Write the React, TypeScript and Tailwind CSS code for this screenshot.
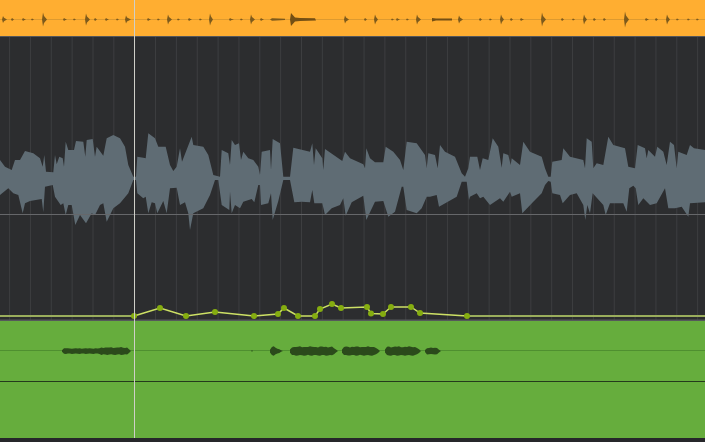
import React from "react";

type Pt = [number, number];

// envelope points per stretch: [start x, upper, lower], traced at 3x
const WAVE: { x0: number; up: number[]; low: number[] }[] = [
  {
    x0: 0,
    up: [0,105,15,125,35,135,45,105,60,105,75,78,100,85,120,100,128,125,133,90,138,140,160,142,165,90,170,118,178,95,188,100,192,125,197,50,205,75,222,75,228,48,250,50,256,95,260,45,278,42,285,95,290,65,310,92,320,40,340,30,360,40,375,65,385,120,400,155,408,155,412,95,430,98,437,100,445,25,465,40,475,65,497,65,510,120,520,138,530,125,540,70,546,110,575,35,580,60,610,65,625,90,640,150,660,155,665,75,685,85,690,120,695,45],
    low: [0,210,12,200,25,190,40,205,55,210,68,265,75,235,90,228,125,222,130,262,135,185,158,180,165,215,182,240,190,235,197,270,205,240,215,240,226,300,240,270,258,295,275,265,285,270,300,240,310,235,320,290,340,250,360,235,385,205,400,165,408,165,412,205,430,220,437,215,445,265,455,232,465,235,472,265,490,228,500,265,510,190,530,188,540,240,555,232,565,265,570,315,580,265,610,250,630,210,645,165,655,165,665,240,688,255,690,200,695,265],
  },
  {
    x0: 235,
    up: [0,60,12,55,18,105,25,80,40,100,55,105,70,125,75,150,80,80,105,75,108,135,113,42,135,55,145,155,165,155,175,68,225,80,232,55,237,120,242,70,262,100,265,135,270,72,322,108,330,80,345,100,385,118,390,130,394,70,405,100,420,112,445,112,452,65,475,80,495,105,505,135,515,50,545,55,570,90,575,130,580,85,600,90,608,130,615,60,630,80,660,95,680,145,690,155,700,130],
    low: [0,240,15,250,25,230,50,222,58,232,70,180,75,180,78,240,100,235,108,205,113,285,130,228,145,165,165,165,178,232,200,230,225,232,232,195,238,235,262,235,270,270,290,250,315,240,325,220,332,272,350,232,385,212,394,285,420,230,445,228,460,275,480,260,500,185,505,185,515,255,545,265,560,250,575,215,585,215,605,210,612,245,665,215,680,170,695,170,702,225],
  },
  {
    x0: 470,
    up: [0,95,22,95,30,135,38,100,55,105,68,40,85,65,95,128,100,85,115,90,122,120,125,100,150,120,160,50,180,80,215,95,225,130,235,155,242,155,247,110,275,105,280,70,300,95,340,105,345,130,350,40,365,50,370,130,380,115,400,120,415,35,430,60,465,70,475,125,495,130,503,60,525,70,530,100,535,75,555,95,562,65,580,80,590,120,600,50,612,60,620,130,625,80,650,90,660,60,672,70,705,75],
    low: [0,215,20,205,30,220,40,215,60,240,90,220,100,230,120,200,125,215,150,205,157,265,190,230,215,205,225,180,235,168,242,170,247,205,270,210,278,235,300,210,320,205,340,240,346,285,352,240,360,265,368,205,400,240,407,270,420,235,460,235,470,260,478,190,490,182,497,190,505,240,520,220,540,240,560,235,585,190,595,250,615,250,635,245,655,275,660,235,705,232],
  },
];

const toPts = (x0: number, flat: number[]): Pt[] => {
  const pts: Pt[] = [];
  for (let i = 0; i < flat.length; i += 2) {
    pts.push([x0 + flat[i] / 3, 125 + flat[i + 1] / 3]);
  }
  return pts;
};

const wavePath = (() => {
  const up = WAVE.flatMap((s) => toPts(s.x0, s.up));
  const low = WAVE.flatMap((s) => toPts(s.x0, s.low));
  const all = [...up, ...low.reverse()];
  return all.map(([x, y], i) => `${i ? "L" : "M"}${x.toFixed(1)} ${(y - 37).toFixed(1)}`).join(" ") + " Z";
})();

const GRID = Array.from({ length: 34 }, (_, i) => 9.6 + i * 20.85);

const AUTOMATION: Pt[] = [
  [134, 316], [160, 308], [186, 316], [215, 312], [254, 316], [278, 314], [284, 308],
  [298, 316], [315, 316], [320, 309], [332, 304], [341, 308], [367, 307], [371, 313.5],
  [383, 314], [391, 307], [411, 307], [420, 313], [467, 316],
];

// [x, half height, tail length]
const HITS: [number, number, number][] = [
  [3, 3.5, 4], [12, 1.5, 2], [23, 1.5, 3], [32, 1, 2], [43, 7, 4], [64, 1.5, 3], [74, 1, 2], [86, 6, 4],
  [95, 1.5, 2], [106, 1.5, 3], [117, 1, 2], [126, 4, 5], [148, 1.5, 3], [158, 1, 2], [168, 5, 4],
  [178, 1, 2], [189, 1.5, 3], [200, 1, 2], [210, 6, 3], [230, 1.5, 4], [241, 1, 2], [251, 5, 4],
  [261, 1.5, 3], [345, 4, 4], [365, 1.5, 2], [375, 5, 3], [392, 1, 2], [397, 1.5, 3], [407, 1, 2],
  [417, 5, 4], [459, 4, 4], [480, 1.5, 2], [490, 1, 2], [501, 5, 3], [511, 1.5, 2], [521, 1.5, 3],
  [542, 7, 4], [562, 1.5, 2], [573, 1, 2], [584, 5, 3], [594, 1.5, 2], [604, 1.5, 2], [625, 8, 4],
  [646, 1.5, 3], [656, 1.5, 2], [667, 5, 3], [677, 1, 2], [688, 1, 2], [697, 1, 2],
];

// [start, end, half height, tail]
const BLOBS: [number, number, number, number][] = [
  [62, 131, 4, 4], [270, 283, 4.8, 9], [290, 338, 4.8, 6], [342, 380, 4.8, 5], [385, 421, 4.8, 5], [425, 441, 3.6, 4],
];

const blobPath = ([a, b, h, tail]: [number, number, number, number], cy: number) => {
  const top: Pt[] = [];
  const bottom: Pt[] = [];
  const n = Math.max(4, Math.round((b - a) / 2));
  for (let i = 0; i <= n; i++) {
    const x = a + ((b - a) * i) / n;
    const edge = Math.min(1, 0.35 + (x - a) / 3) * Math.min(1, (b - x) / tail);
    const noise = 0.86 + 0.14 * Math.sin(x * 1.9) * Math.cos(x * 0.7);
    // the first clip is thinner on its left part
    const grow = a === 62 && x < 100 ? 0.75 : 1;
    top.push([x, cy - h * edge * noise * grow]);
    bottom.push([x, cy + h * edge * (0.9 + 0.1 * Math.sin(x * 2.3)) * grow]);
  }
  return [...top, ...bottom.reverse()].map(([x, y], i) => `${i ? "L" : "M"}${x.toFixed(1)} ${y.toFixed(1)}`).join(" ") + " Z";
};

const App: React.FC = () => {
  return (
    <div className="relative flex h-[442px] w-[705px] flex-col overflow-hidden bg-[#26272a]">
      {/* audio clip on top */}
      <div className="h-9 shrink-0 bg-[#ffae31]">
        <svg width="705" height="36" className="block">
          <line x1="0" y1="19.5" x2="705" y2="19.5" stroke="#dd9a2f" strokeWidth="1" />
          <g className="blur-[0.3px]">
            {HITS.map(([x, h, t]) => (
              <path key={x} d={`M${x} ${19.5 - h} L${x + 1} ${19.5 - h / 2} L${x + t} 19.5 L${x + 1} ${19.5 + h / 2} L${x} ${19.5 + h} L${x - 1} 19.5 Z`} fill="#7d5a1c" />
            ))}
            <path d="M270 19.5 L272 18.3 L285 18.8 L285 20 L272 20.8 Z" fill="#7d5a1c" />
            <path d="M291 13 L295 17.5 L300 18 L315 18.3 L316 20.5 L300 21 L295 21.5 L291 26 L290 19.5 Z" fill="#744f14" />
            <path d="M432 18 L436 18.6 L452 18.6 L452 20.4 L436 20.4 L432 21.5 Z" fill="#744f14" />
          </g>
        </svg>
      </div>

      {/* main track */}
      <div className="h-[285px] shrink-0 border-t border-t-[#55575a] bg-[#2c2d2f]">
        <svg width="705" height="284" className="block">
          {GRID.map((x) => (
            <line key={x} x1={x} y1="0" x2={x} y2="284" stroke="#3d3e40" strokeWidth="1" />
          ))}
          <path d={wavePath} fill="#5f6c74" className="blur-[0.3px]" />
          <line x1="0" y1="177.5" x2="705" y2="177.5" stroke="#66676a" strokeWidth="1" />
          <line x1="0" y1="279" x2="134" y2="279" stroke="#9aad5c" strokeWidth="2" />
          <line x1="467" y1="279" x2="705" y2="279" stroke="#9aad5c" strokeWidth="2" />
          <polyline points={AUTOMATION.map(([x, y]) => `${x},${y - 37}`).join(" ")} fill="none" stroke="#cde065" strokeWidth="1.5" />
          {AUTOMATION.map(([x, y]) => (
            <circle key={x} cx={x} cy={y - 37} r="3" fill="#85ad10" />
          ))}
          <line x1="0" y1="283.2" x2="705" y2="283.2" stroke="#55585b" strokeWidth="1.6" />
        </svg>
      </div>

      {/* midi / vocal clip */}
      <div className="h-[117px] shrink-0 bg-[#66ad3d]">
        <svg width="705" height="117" className="block">
          <line x1="0" y1="29.5" x2="705" y2="29.5" stroke="#4f8f30" strokeWidth="1" />
          <line x1="0" y1="60.5" x2="705" y2="60.5" stroke="#243a1c" strokeWidth="1" />
          {BLOBS.map((b) => (
            <path key={b[0]} d={blobPath(b, 30)} fill="#2b4a1b" />
          ))}
          <rect x="251" y="29" width="2" height="1.5" fill="#3f7327" />
        </svg>
      </div>

      {/* playhead */}
      <div className="absolute bottom-1 left-[134px] top-0 w-px bg-[#cfcfc8]" />
    </div>
  );
};

export default App;
